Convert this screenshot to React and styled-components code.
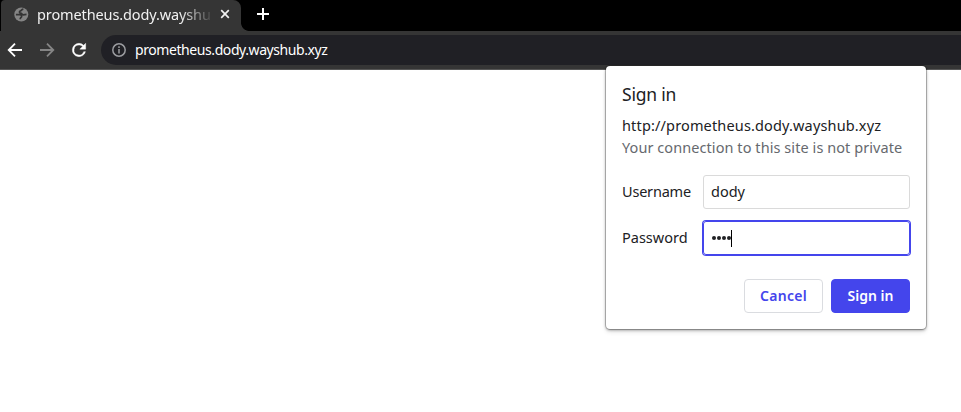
import React from "react";
import styled, { createGlobalStyle } from "styled-components";

const GlobalStyle = createGlobalStyle`
  * { box-sizing: border-box; }
  html, body { margin: 0; background: #fff; overflow: hidden; }
  body { font-family: "Noto Sans", sans-serif; font-size: 14px; color: #202124; }
  svg { display: block; flex: none; }
`;

const Browser = styled.div`
  position: relative;
  width: 961px;
  height: 412px;
  overflow: hidden;
  background: #fff;
`;

const TabStrip = styled.header`
  display: flex;
  height: 31px;
  background: #000;
`;

const Tab = styled.div`
  display: flex;
  align-items: center;
  width: 240px;
  margin-left: 1px;
  padding: 0 0 3px 13px;
  background: #353535;
  border-radius: 4px 8px 0 0;
`;

const TabTitle = styled.div`
  width: 175px;
  margin: 0 6px 0 8px;
  overflow: hidden;
  white-space: nowrap;
  line-height: 24px;
  font-size: 14.5px;
  letter-spacing: -0.12px;
  color: #f1f1f1;
  mask-image: linear-gradient(to right, #000 143px, transparent 177px);
`;

const TabFlare = styled.div`
  align-self: flex-end;
  width: 8px;
  height: 8px;
  background: radial-gradient(circle at 8px 0, #000 7.5px, #353535 8.2px);
`;

const NewTab = styled.div`
  padding: 8px 0 0 8px;
`;

const Toolbar = styled.div`
  display: flex;
  align-items: center;
  height: 39px;
  padding: 0 0 1px 5px;
  background: #353535;
  border-bottom: 1px solid #565656;
`;

const Navigation = styled.nav`
  display: flex;
  gap: 12px;
  width: 96px;
`;

const AddressBar = styled.div`
  display: flex;
  flex: 1;
  align-items: center;
  gap: 8px;
  height: 30px;
  padding-left: 10px;
  background: #202025;
  border-radius: 15px 0 0 15px;
`;

const Address = styled.span`
  font-size: 14px;
  letter-spacing: -0.42px;
  line-height: 22px;
  color: #fff;
`;

const Dialog = styled.form`
  position: absolute;
  top: 66px;
  left: 606px;
  width: 320px;
  height: 263px;
  padding: 16px 16px 16px;
  background: #fff;
  border-radius: 4px;
  box-shadow: 0 0 0 1px rgba(0, 0, 0, 0.2), 0 1px 3px rgba(0, 0, 0, 0.42), 0 3px 5px rgba(0, 0, 0, 0.1);
  white-space: nowrap;
`;

const Heading = styled.h1`
  margin: 0 0 8px;
  font-size: 17.5px;
  font-weight: 400;
  line-height: 24px;
  letter-spacing: -0.2px;
`;

const Origin = styled.div`
  line-height: 22px;
  font-size: 14.5px;
  letter-spacing: 0.15px;
`;

const Warning = styled.div`
  margin-bottom: 17px;
  line-height: 22px;
  font-size: 14.5px;
  letter-spacing: 0.07px;
  color: #66696e;
`;

const Field = styled.div`
  display: grid;
  grid-template-columns: 81px 207px;
  align-items: center;
  height: 34px;
  margin-bottom: 12px;
`;

const FieldName = styled.span`
  padding-bottom: 2px;
  font-size: 14.5px;
  letter-spacing: ${(p) => p.$tracking || "0"};
`;

const Input = styled.div`
  display: flex;
  align-items: center;
  height: 34px;
  padding: ${(p) => (p.$focused ? "0 8px" : "0 7px 2px")};
  border: 1px solid ${(p) => (p.$focused ? "#4445ec" : "#dadada")};
  box-shadow: ${(p) => (p.$focused ? "0 0 0 1px #4445ec" : "none")};
  border-radius: 3px;
  font-size: 14.5px;
`;

const Dots = styled.span`
  display: flex;
  gap: 1px;
  align-items: center;
`;

const Dot = styled.i`
  width: 4px;
  height: 4px;
  border-radius: 50%;
  background: #202124;
`;

const Caret = styled.i`
  width: 1px;
  height: 17px;
  background: #000;
`;

const Actions = styled.div`
  display: flex;
  justify-content: flex-end;
  gap: 8px;
  margin-top: 24px;
`;

const Button = styled.button`
  width: 79px;
  height: 34px;
  padding: 0 0 2px;
  border: 1px solid ${(p) => (p.$primary ? "#4445ec" : "#dadce0")};
  border-radius: 4px;
  background: ${(p) => (p.$primary ? "#4445ec" : "#fff")};
  color: ${(p) => (p.$primary ? "#fff" : "#4445ec")};
  font: 600 14px "Noto Sans", sans-serif;
  letter-spacing: ${(p) => p.$tracking};
`;

const GlobeIcon = () => (
  <svg width="15" height="15" viewBox="0 0 15 15">
    <circle cx="7.3" cy="7.5" r="7" fill="#858585" />
    <path
      d="M9.4 2.2C7.6 2.3 7.7 3.4 6.2 4c-1.2.5-.8 2 .4 2.2 1.5.2 1.2 1.5 2.7 1.6l3.2-.4M1.9 7.6h3.3c1.7 0 2.8.9 2.4 2.1-.3.9-1.4.7-1.4 2.6"
      fill="none"
      stroke="#353535"
      strokeWidth="1.7"
    />
  </svg>
);

const CloseIcon = () => (
  <svg width="14" height="14" viewBox="0 0 14 14" stroke="#f1f1f1" strokeWidth="1.7">
    <path d="m3.2 3.2 7.6 7.6m0-7.6-7.6 7.6" />
  </svg>
);

const PlusIcon = () => (
  <svg width="12" height="12" viewBox="0 0 12 12" stroke="#fff" strokeWidth="2">
    <path d="M6 0v12M0 6h12" />
  </svg>
);

const ArrowIcon = ({ forward }) => (
  <svg width="20" height="20" viewBox="0 0 20 20" fill="none" stroke={forward ? "#858585" : "#fff"} strokeWidth="1.8">
    <path d={forward ? "M3 10h13M10 3.7l6.3 6.3-6.3 6.3" : "M17 10H4M10 3.7 3.7 10l6.3 6.3"} />
  </svg>
);

const ReloadIcon = () => (
  <svg width="20" height="20" viewBox="0 0 24 24" fill="#fff">
    <path d="M17.65 6.35A7.96 7.96 0 0 0 12 4a8 8 0 1 0 7.73 10h-2.08A6 6 0 1 1 12 6c1.66 0 3.14.69 4.22 1.78L13 11h7V4l-2.35 2.35Z" stroke="#fff" strokeWidth=".5" />
  </svg>
);

const InfoIcon = () => (
  <svg width="16" height="16" viewBox="0 0 16 16" fill="none" stroke="#9b9ca0" strokeWidth="1.5">
    <circle cx="8" cy="8" r="6.2" />
    <path d="M8 7v4.5M8 4.3v1.6" />
  </svg>
);

export default function App() {
  return (
    <>
      <GlobalStyle />
      <Browser>
        <TabStrip>
          <Tab>
            <GlobeIcon />
            <TabTitle>prometheus.dody.wayshub.xyz</TabTitle>
            <CloseIcon />
          </Tab>
          <TabFlare />
          <NewTab><PlusIcon /></NewTab>
        </TabStrip>
        <Toolbar>
          <Navigation>
            <ArrowIcon />
            <ArrowIcon forward />
            <ReloadIcon />
          </Navigation>
          <AddressBar>
            <InfoIcon />
            <Address>prometheus.dody.wayshub.xyz</Address>
          </AddressBar>
        </Toolbar>
        <Dialog>
          <Heading>Sign in</Heading>
          <Origin>http://prometheus.dody.wayshub.xyz</Origin>
          <Warning>Your connection to this site is not private</Warning>
          <Field>
            <FieldName $tracking="-0.2px">Username</FieldName>
            <Input>dody</Input>
          </Field>
          <Field>
            <FieldName>Password</FieldName>
            <Input $focused>
              <Dots><Dot /><Dot /><Dot /><Dot /></Dots>
              <Caret />
            </Input>
          </Field>
          <Actions>
            <Button type="button" $tracking="0.3px">Cancel</Button>
            <Button type="button" $primary $tracking="0">Sign in</Button>
          </Actions>
        </Dialog>
      </Browser>
    </>
  );
}
